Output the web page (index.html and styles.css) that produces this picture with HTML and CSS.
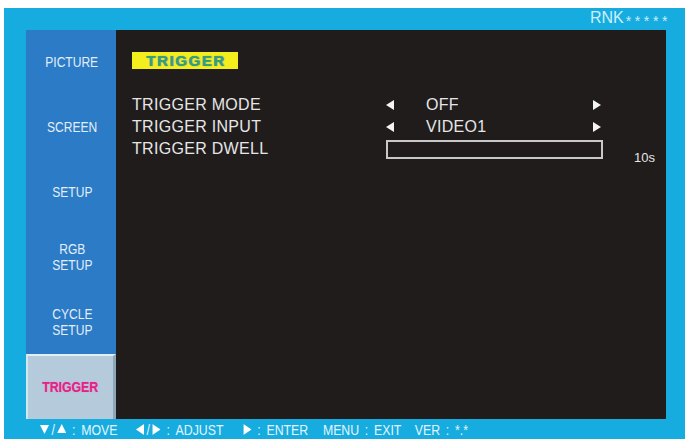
FILE: index.html
```html
<!DOCTYPE html>
<html lang="en">
<head>
    <meta charset="UTF-8">
    <meta name="viewport" content="width=device-width, initial-scale=1.0">
    <title>OSD Trigger Menu</title>
    <link rel="stylesheet" href="styles.css">
</head>
<body>
    <div class="frame">
        <div class="topbar">
            <span class="model">RNK<span class="stars">*****</span></span>
        </div>
        <div class="screen">
            <ul class="sidebar">
                <li><span>PICTURE</span></li>
                <li><span>SCREEN</span></li>
                <li><span>SETUP</span></li>
                <li><span>RGB<br>SETUP</span></li>
                <li><span>CYCLE<br>SETUP</span></li>
                <li class="active"><span>TRIGGER</span></li>
            </ul>
            <main class="panel">
                <div class="title">TRIGGER</div>
                <div class="rows">
                    <div class="row">
                        <span class="label">TRIGGER MODE</span>
                        <span class="choice">
                            <svg class="arrow" width="8" height="10" viewBox="0 0 8 10"><path d="M8 0L0 5l8 5z"/></svg>
                            <span class="value">OFF</span>
                            <svg class="arrow" width="8" height="10" viewBox="0 0 8 10"><path d="M0 0l8 5-8 5z"/></svg>
                        </span>
                    </div>
                    <div class="row">
                        <span class="label">TRIGGER INPUT</span>
                        <span class="choice">
                            <svg class="arrow" width="8" height="10" viewBox="0 0 8 10"><path d="M8 0L0 5l8 5z"/></svg>
                            <span class="value">VIDEO1</span>
                            <svg class="arrow" width="8" height="10" viewBox="0 0 8 10"><path d="M0 0l8 5-8 5z"/></svg>
                        </span>
                    </div>
                    <div class="row">
                        <span class="label">TRIGGER DWELL</span>
                        <span class="bar"></span>
                        <span class="seconds">10s</span>
                    </div>
                </div>
            </main>
        </div>
        <div class="footer">
            <div class="keys">
                <span class="hint">
                    <svg width="11" height="10" viewBox="0 0 11 10"><path d="M0 1h11L5.5 10z"/></svg><span class="slash">/</span><svg width="11" height="10" viewBox="0 0 11 10"><path d="M0 9h11L5.5 0z"/></svg>
                    <span class="colon">:</span>MOVE
                </span>
                <span class="hint">
                    <svg width="10" height="11" viewBox="0 0 10 11"><path d="M10 0L0 5.5l10 5.5z"/></svg><span class="slash">/</span><svg width="10" height="11" viewBox="0 0 10 11"><path d="M0 0l10 5.5L0 11z"/></svg>
                    <span class="colon">:</span>ADJUST
                </span>
                <span class="hint">
                    <svg width="10" height="11" viewBox="0 0 10 11"><path d="M0 0l10 5.5L0 11z"/></svg>
                    <span class="colon">:</span>ENTER
                </span>
                <span class="hint">MENU<span class="colon">:</span>EXIT</span>
                <span class="hint">VER<span class="colon">:</span>*.*</span>
            </div>
        </div>
    </div>
</body>
</html>
```

FILE: styles.css
```css
body {
    margin: 0;
    background: #ffffff;
    font-family: 'Liberation Sans', Arial, sans-serif;
}

.frame {
    width: 681px;
    height: 431px;
    margin: 8px 0 0 4px;
    padding: 0 19px 0 22px;
    box-sizing: border-box;
    background: #17acdf;
    display: flex;
    flex-direction: column;
}

.topbar {
    height: 22px;
    display: flex;
    justify-content: flex-end;
    align-items: center;
    margin-right: -2px;
}

.model {
    color: #cdeffc;
    font-size: 16px;
}

.stars {
    font-size: 14px;
    letter-spacing: 3.6px;
    margin-left: 2px;
    margin-right: -3px;
    vertical-align: -3px;
}

.screen {
    height: 389px;
    display: grid;
    grid-template-columns: 90px 550px;
}

.sidebar {
    list-style: none;
    margin: 0;
    padding: 0;
    background: #2b7bc6;
    display: grid;
    grid-template-rows: repeat(6, 1fr);
}

.sidebar li {
    display: flex;
    align-items: center;
    justify-content: center;
    text-align: center;
    color: #e4eef8;
    font-size: 14px;
    line-height: 16px;
    padding-left: 2px;
}

.sidebar li span {
    display: inline-block;
    transform: scaleX(0.86);
}

.sidebar li.active {
    background: #b5cbdb;
    border-top: 2px solid #e2eef6;
    border-left: 2px solid #d4e6f0;
    border-right: 3px solid #8fa6b6;
    color: #e2238a;
    padding: 0 0 2px 0;
    text-shadow: 0 0 1px #f06aa8;
}

.sidebar li.active span {
    font-weight: bold;
    font-size: 15px;
    transform: scaleX(0.82);
}

.panel {
    background: #201c1c;
    padding: 22px 11px 0 16px;
}

.title {
    width: 106px;
    height: 17px;
    background: #f4ef1c;
    color: #35a06a;
    font-weight: bold;
    font-size: 15px;
    line-height: 17px;
    padding-left: 14px;
    box-sizing: border-box;
    letter-spacing: 1.6px;
    text-shadow: 1px 0 1px #3a86c8;
}

.rows {
    margin-top: 25px;
}

.row {
    height: 22px;
    display: grid;
    grid-template-columns: 254px 217px 1fr;
    align-items: center;
    color: #e6e6e6;
    font-size: 16px;
    letter-spacing: 0.3px;
}

.choice {
    display: flex;
    align-items: center;
}

.arrow {
    fill: #f4f4f4;
}

.choice .value {
    flex: 1;
    padding-left: 32px;
}

.choice .arrow:last-child {
    margin-right: 2px;
}

.bar {
    height: 19px;
    border: 2px solid #c8c8c8;
    box-sizing: border-box;
}

.seconds {
    align-self: end;
    text-align: right;
    font-size: 13px;
    letter-spacing: 0;
    margin-bottom: -5px;
}

.footer {
    height: 20px;
    display: flex;
    align-items: center;
    padding-left: 14px;
    color: #e6f4fc;
    font-size: 15px;
}

.keys {
    display: grid;
    grid-template-columns: 117px 131px 97px 112px auto;
    align-items: center;
    transform: scaleX(0.82);
    transform-origin: 0 50%;
    white-space: nowrap;
}

.hint {
    display: flex;
    align-items: center;
}

.hint .slash {
    margin: 0 3px;
}

.hint .colon {
    margin: 0 7px 0 7px;
}

.footer svg {
    fill: #ffffff;
}
```
